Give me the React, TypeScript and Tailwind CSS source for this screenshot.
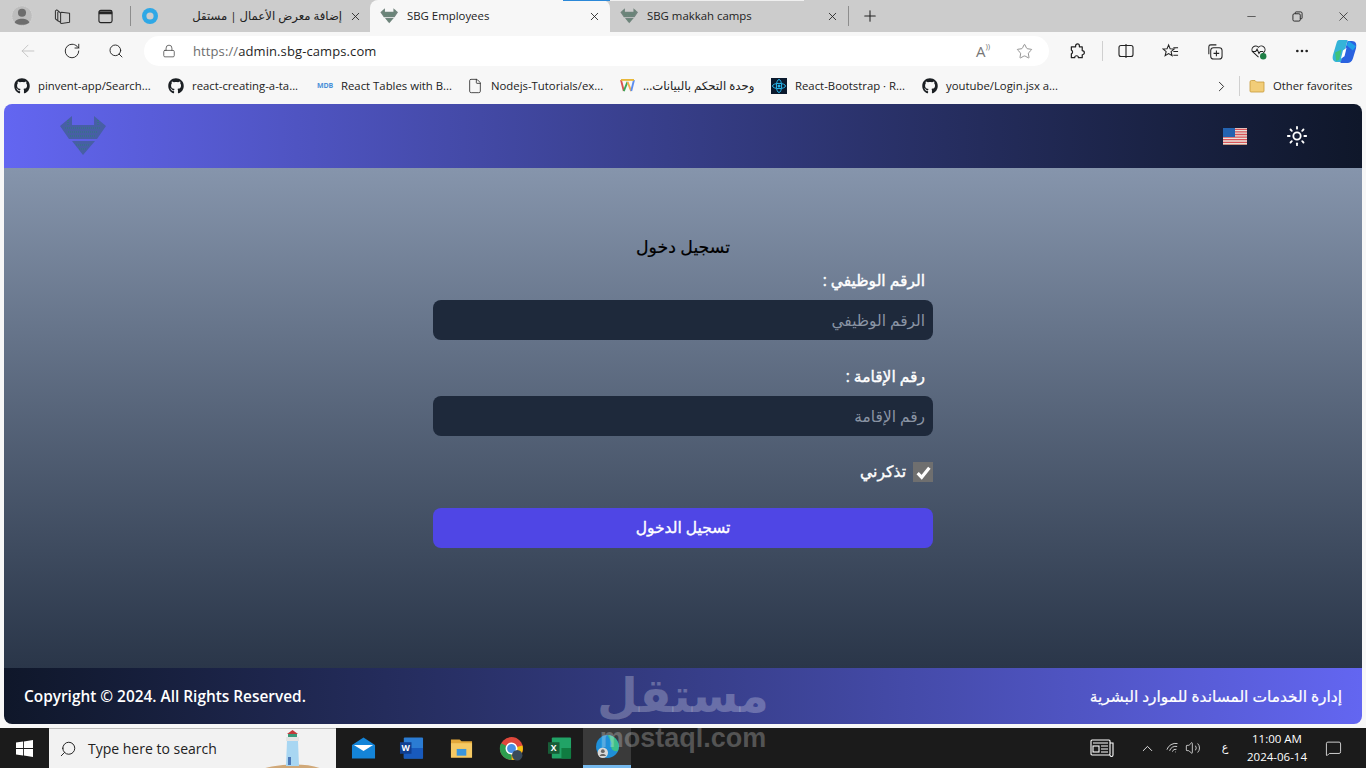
import React from "react";
import { ArrowLeft, RotateCw, Search, Lock, Star, Plus, X, Minus, Sun, ChevronRight, ChevronUp, MoreHorizontal, Volume2, Wifi, MessageSquare, File as FileIcon } from "lucide-react";
import { FaGithub } from "react-icons/fa";

const SegoeUI = "font-['Open_Sans','Noto_Sans','DejaVu_Sans',sans-serif]";

function SbgLogo({ className, color = "#475fa5", accent = "#2f7f78" }: { className?: string; color?: string; accent?: string }) {
  return (
    <svg viewBox="0 0 47 40" className={className}>
      <path d="M13 0 L1 10 L10 23 L38 23 L47 10 L35 0 L35 9 L13 9 Z" fill={color} />
      <path d="M13 25 L36 25 L24 39 Z" fill={color} />
      <path d="M6 12 H42 M9 16 H39 M11 20 H37 M17 29 H31 M20 33 H28 M9 4 V10 M39 4 V10" stroke={accent} strokeWidth="1.2" strokeDasharray="1 1" />
    </svg>
  );
}

function EdgeMini() {
  return (
    <svg viewBox="0 0 16 16" className="w-4 h-4">
      <circle cx="8" cy="8" r="8" fill="#2fa8e6" />
      <circle cx="8" cy="8" r="3.6" fill="#cccccc" />
    </svg>
  );
}

function Tab({ w, active, icon, label, rtl }: { w: string; active?: boolean; icon: React.ReactNode; label: string; rtl?: boolean }) {
  return (
    <div className={`${w} h-8 flex items-center pl-[10px] ${rtl ? "pr-[8px]" : "pr-[9px]"} shrink-0 ${active ? "bg-[#f7f7f7] rounded-t-lg" : ""}`}>
      <div className="w-[18px] flex justify-center shrink-0">{icon}</div>
      <div dir={rtl ? "rtl" : "ltr"} className={`flex-1 ${rtl ? "text-right pr-[7px] text-[11.65px]" : "pl-[9px] text-[11.4px]"} text-[#222] whitespace-nowrap overflow-hidden`}>
        {label}
      </div>
      <X size={13} strokeWidth={1.6} className="text-[#222] shrink-0" />
    </div>
  );
}

function TabStrip() {
  return (
    <div className="relative h-8 bg-[#cccccc] flex items-center shrink-0">
      <div className="w-[44px] flex justify-center">
        <svg viewBox="0 0 24 24" className="w-[22px] h-[22px]">
          <circle cx="12" cy="12" r="11" fill="#bdbdbd" stroke="#d6d6d6" strokeDasharray="1 1" />
          <circle cx="12" cy="8.5" r="4.4" fill="#6d6d6d" />
          <path d="M4 19 C5 13.5 19 13.5 20 19 C17 22.5 7 22.5 4 19 Z" fill="#6d6d6d" />
        </svg>
      </div>
      <div className="w-[36px] flex justify-center">
        <svg viewBox="0 0 18 18" className="w-[17px] h-[17px]" fill="none" stroke="#333" strokeWidth="1.1" strokeLinejoin="round">
          <path d="M8 4.5 L16.5 5.5 V15 L8 16.5 C7.3 16.5 7 16 7 15.5 V5.5 C7 5 7.4 4.5 8 4.5 Z" />
          <path d="M7 5.5 L5 3.5 L4 4.5 V13.5 L7 15" />
          <path d="M5 3.5 L3 2 L1.5 3 V11.5 L4 13.5" />
        </svg>
      </div>
      <div className="w-[50px] flex justify-center">
        <svg viewBox="0 0 16 16" className="w-[15px] h-[15px]" fill="none" stroke="#222" strokeWidth="1.2">
          <rect x="1" y="1.5" width="14" height="13" rx="2" />
          <path d="M1 5 H15" />
          <path d="M1 2.5 H15 V5 H1 Z" fill="#222" stroke="none" />
        </svg>
      </div>
      <div className="w-px h-[20px] bg-[#8d8d8d] shrink-0" />
      <Tab w="w-[239px]" icon={<EdgeMini />} label="إضافة معرض الأعمال | مستقل" rtl />
      <Tab w="w-[240px]" active icon={<SbgLogo className="w-[18px] h-[16px]" color="#74857f" accent="#3d8a5f" />} label="SBG Employees" />
      <Tab w="w-[238px]" icon={<SbgLogo className="w-[18px] h-[16px]" color="#74857f" accent="#3d8a5f" />} label="SBG makkah camps" />
      <div className="w-px h-[20px] bg-[#8d8d8d] shrink-0" />
      <div className="w-[42px] flex justify-center">
        <Plus size={18} strokeWidth={1.4} className="text-[#222]" />
      </div>
      <div className="ml-auto flex items-center text-[#222]">
        <div className="w-[46px] flex justify-center"><Minus size={13} strokeWidth={1.2} /></div>
        <div className="w-[46px] flex justify-center">
          <svg viewBox="0 0 12 12" className="w-[11px] h-[11px]" fill="none" stroke="#222" strokeWidth="1">
            <rect x="1" y="3" width="8" height="8" rx="1.5" />
            <path d="M3.5 3 V2 A1 1 0 0 1 4.5 1 H9.5 A1.5 1.5 0 0 1 11 2.5 V7.5 A1 1 0 0 1 10 8.5 H9" />
          </svg>
        </div>
        <div className="w-[46px] flex justify-center"><X size={15} strokeWidth={1.2} /></div>
      </div>
      <div className="absolute top-0 left-[563px] w-[47px] h-px bg-[#2b88d8]" />
      <div className="absolute top-0 left-[610px] w-[194px] h-px bg-[#efefef]" />
    </div>
  );
}

function Toolbar() {
  return (
    <div className="h-[38px] flex items-start pt-[4px] shrink-0">
      <div className="w-[144px] h-[30px] flex items-center shrink-0 text-[#222]">
        <div className="w-[56px] flex justify-center"><ArrowLeft size={20} strokeWidth={1} className="text-[#bdbdbd]" /></div>
        <div className="w-[32px] flex justify-center"><RotateCw size={18} strokeWidth={1.25} /></div>
        <div className="w-[56px] flex justify-center"><Search size={16} strokeWidth={1.4} /></div>
      </div>
      <div className="w-[905px] h-[30px] bg-white rounded-full flex items-center shrink-0">
        <div className="w-[49px] flex justify-center"><Lock size={14} strokeWidth={1.3} className="text-[#444]" /></div>
        <div className="text-[13px] mt-[1px] text-[#1f1f1f] whitespace-nowrap tracking-[0.1px]">
          <span className="text-[#6d6d6d]">https://</span>admin.sbg-camps.com
        </div>
        <div className="ml-auto flex items-center text-[#777]">
          <span className="text-[15px] w-[44px] text-center">A<span className="text-[8px] align-top">))</span></span>
          <div className="w-[44px] flex justify-center pr-[6px]"><Star size={17} strokeWidth={1.1} /></div>
        </div>
      </div>
      <div className="h-[30px] flex items-center text-[#222]">
        <div className="w-[53px] pl-[3px] flex justify-center">
          <svg viewBox="0 0 18 18" className="w-[17px] h-[17px]" fill="none" stroke="#222" strokeWidth="1.3" strokeLinejoin="round">
            <path d="M7 3 A2 2 0 0 1 11 3 V4 H14 V8 A2.2 2.2 0 0 1 14 12.5 V15.5 H10 A2 2 0 0 0 6 15.5 H2.5 V11.5 A2.2 2.2 0 0 0 2.5 7.5 V4 H7 Z" />
          </svg>
        </div>
        <div className="w-px h-[20px] bg-[#d0d0d0]" />
        <div className="w-[46px] flex justify-center">
          <svg viewBox="0 0 16 16" className="w-[16px] h-[16px]" fill="none" stroke="#222" strokeWidth="1.1">
            <rect x="1" y="2.5" width="14" height="11" rx="2" />
            <path d="M8 1 V15" />
          </svg>
        </div>
        <div className="w-[43px] flex justify-center">
          <svg viewBox="0 0 18 18" className="w-[17px] h-[17px]" fill="none" stroke="#222" strokeWidth="1.1">
            <path d="M7 2 L8.6 6 L13 6.3 L9.6 9.2 L10.7 13.5 L7 11.2 L3.3 13.5 L4.4 9.2 L1 6.3 L5.4 6 Z" />
            <path d="M12 5 H17 M12 9 H17 M12 13 H17" />
          </svg>
        </div>
        <div className="w-[45px] flex justify-center">
          <svg viewBox="0 0 18 18" className="w-[17px] h-[17px]" fill="none" stroke="#222" strokeWidth="1.1">
            <path d="M3 12 V4 A2 2 0 0 1 5 2 H11" />
            <rect x="5" y="5" width="12" height="12" rx="3" />
            <path d="M11 8 V14 M8 11 H14" />
          </svg>
        </div>
        <div className="w-[43px] flex justify-center relative">
          <svg viewBox="0 0 18 18" className="w-[17px] h-[17px]" fill="none" stroke="#222" strokeWidth="1.1">
            <path d="M9 15 L3 9.5 A3.7 3.7 0 0 1 9 4.5 A3.7 3.7 0 0 1 15 9.5 L12 13" />
            <path d="M2 9 H6 L7.5 6.5 L9.5 11 L11 9 H14" />
            <circle cx="14" cy="14" r="3.4" fill="#1f7f46" stroke="none" />
          </svg>
        </div>
        <div className="w-[44px] flex justify-center"><MoreHorizontal size={16} strokeWidth={2} /></div>
        <div className="w-[40px] flex justify-center">
          <svg viewBox="0 0 24 24" className="w-[25px] h-[25px]">
            <path d="M7 1 H15 L12 12 L9 22 H5 C1 22 0 19 1 15 L4 5 C4.6 2.5 5.5 1 7 1 Z" fill="#35b4d8" />
            <path d="M15 2 H19 C23 2 24 5 23 9 L20 19 C19 22 17 23 15 23 H8 L12 12 Z" fill="#2a62e0" />
            <path d="M3 13 L9 10 L7 20 L4 21 Z" fill="#3fc27a" />
            <path d="M10.5 11 L14 8.5 L12 16.5 L8.5 19 Z" fill="#ffffff" />
            <path d="M16 2 L23 7 L20 11 L14 6 Z" fill="#1f9ee8" />
          </svg>
        </div>
      </div>
    </div>
  );
}

function GH() {
  return <FaGithub size={16} className="text-[#1b1f23] shrink-0" />;
}

function Bookmark({ w, icon, label, rtl }: { w: string; icon: React.ReactNode; label: string; rtl?: boolean }) {
  return (
    <div className={`${w} flex items-center shrink-0`}>
      <div className="w-[16px] flex justify-center shrink-0">{icon}</div>
      <div dir={rtl ? "rtl" : "ltr"} className={`ml-[8px] ${rtl ? "text-[11.7px]" : "text-[11.35px]"} text-[#222] whitespace-nowrap`}>{label}</div>
    </div>
  );
}

function Bookmarks() {
  return (
    <div className="h-[34px] flex items-center pl-[14px] pb-[2px] shrink-0">
      <Bookmark w="w-[154px]" icon={<GH />} label="pinvent-app/Search..." />
      <Bookmark w="w-[149px]" icon={<GH />} label="react-creating-a-ta..." />
      <Bookmark
        w="w-[150px]"
        icon={<span className="text-[7px] font-bold text-[#4a8fd8] tracking-tight">MDB</span>}
        label="React Tables with B..."
      />
      <Bookmark w="w-[152px]" icon={<FileIcon size={16} strokeWidth={1.2} className="text-[#222]" />} label="Nodejs-Tutorials/ex..." />
      <Bookmark
        w="w-[152px]"
        icon={
          <svg viewBox="0 0 16 14" className="w-[15px] h-[13px]" fill="none" strokeWidth="2">
            <path d="M1 1 L4 13" stroke="#d9534f" />
            <path d="M4 13 L8 3" stroke="#3aa757" />
            <path d="M8 3 L12 13" stroke="#f0ad4e" />
            <path d="M12 13 L15 1" stroke="#5b8def" />
            <path d="M1 1 H15" stroke="#e8b83a" />
          </svg>
        }
        label="وحدة التحكم بالبيانات..."
        rtl
      />
      <Bookmark
        w="w-[151px]"
        icon={
          <svg viewBox="0 0 16 16" className="w-[16px] h-[16px]">
            <rect width="16" height="16" fill="#0b1a2e" />
            <ellipse cx="8" cy="8" rx="6.5" ry="2.6" fill="none" stroke="#27b5ea" />
            <ellipse cx="8" cy="8" rx="2.6" ry="6.5" fill="none" stroke="#27b5ea" />
            <circle cx="8" cy="8" r="1.5" fill="#27b5ea" />
          </svg>
        }
        label="React-Bootstrap · R..."
      />
      <Bookmark w="w-[291px]" icon={<GH />} label="youtube/Login.jsx a..." />
      <div className="w-[18px] -ml-[1px] flex justify-center shrink-0"><ChevronRight size={17} strokeWidth={1.3} className="text-[#222]" /></div>
      <div className="w-px h-[20px] bg-[#d0d0d0] ml-[9px] shrink-0" />
      <div className="w-[17px] ml-[8px] flex justify-center shrink-0">
        <svg viewBox="0 0 16 14" className="w-[16px] h-[14px]">
          <path d="M1 3 A1.5 1.5 0 0 1 2.5 1.5 H6 L7.5 3 H15 V12 A1 1 0 0 1 14 13 H2 A1 1 0 0 1 1 12 Z" fill="#f2cd78" stroke="#c79a3a" strokeWidth="0.8" />
        </svg>
      </div>
      <div className="ml-[8px] text-[11.3px] text-[#222] whitespace-nowrap">Other favorites</div>
    </div>
  );
}

function Field({ label, placeholder }: { label: string; placeholder: string }) {
  return (
    <div className="mb-[24px] w-full">
      <label className="block h-6 leading-6 pr-2 mb-[8px] text-[15.5px] text-white [-webkit-text-stroke:0.4px_#ffffff]">{label}</label>
      <input
        readOnly
        placeholder={placeholder}
        className="block w-full h-10 rounded-lg bg-[#1e293b] px-2 text-[15.4px] text-white placeholder:text-[#8a94a4] outline-none"
      />
    </div>
  );
}

function Page() {
  return (
    <div className={`mx-1 w-[1358px] h-[620px] rounded-t-lg rounded-b-lg overflow-hidden flex flex-col shrink-0 ${SegoeUI}`}>
      <header className="h-16 shrink-0 flex items-center bg-linear-to-r from-[#6366f1] to-[#0f172a]">
        <div className="ml-[55px]">
          <SbgLogo className="w-[47px] h-[40px]" />
        </div>
        <div className="ml-auto flex items-center">
          <svg viewBox="0 0 24 17" className="w-6 h-[17px]">
            <rect width="24" height="17" fill="#e9e3da" />
            <path d="M0 1.3 H24 M0 3.9 H24 M0 6.5 H24 M0 9.1 H24 M0 11.7 H24 M0 14.3 H24" stroke="#d9545a" strokeWidth="1.3" />
            <path d="M0 16.5 H24" stroke="#c88f7f" strokeWidth="1" />
            <rect width="12" height="9" fill="#2463b0" />
          </svg>
          <Sun size={22} strokeWidth={2} className="text-white ml-[39px] mr-[54px]" />
        </div>
      </header>
      <main dir="rtl" className="h-[500px] shrink-0 flex flex-col items-center pt-[64px] bg-linear-to-b from-[#8695ac] to-[#2a3649]">
        <div className="w-[500px]">
          <h1 className="h-7 leading-[30px] mb-[8px] text-center text-[17.3px] font-normal text-black [-webkit-text-stroke:0.2px_#000000]">تسجيل دخول</h1>
          <Field label="الرقم الوظيفي :" placeholder="الرقم الوظيفي" />
          <Field label="رقم الإقامة :" placeholder="رقم الإقامة" />
          <div className="flex items-center h-5 mt-[26px] mb-[26px]">
            <div className="w-5 h-5 bg-[#6f6f6f] flex items-center justify-center">
              <svg viewBox="0 0 16 16" className="w-[17px] h-[17px]" fill="none" stroke="#fff" strokeWidth="3">
                <path d="M2.5 8.5 L6.3 12.5 L13.5 3.5" />
              </svg>
            </div>
            <span className="mr-[7px] text-[15.6px] text-white [-webkit-text-stroke:0.4px_#ffffff]">تذكرني</span>
          </div>
          <button className="block w-full h-10 rounded-lg bg-[#4f46e5] text-[15.5px] text-white [-webkit-text-stroke:0.35px_#ffffff]">تسجيل الدخول</button>
        </div>
      </main>
      <footer className="h-14 shrink-0 flex items-center justify-between px-5 pt-[1px] bg-linear-to-r from-[#0f172a] to-[#6366f1]">
        <div className="text-[15.4px] font-semibold text-white">Copyright © 2024. All Rights Reserved.</div>
        <div dir="rtl" className="text-[15.45px] text-white [-webkit-text-stroke:0.2px_#ffffff]">إدارة الخدمات المساندة للموارد البشرية</div>
      </footer>
    </div>
  );
}

function TaskIcon({ children, active }: { children: React.ReactNode; active?: boolean }) {
  return (
    <div className={`w-[48px] h-10 flex items-center justify-center shrink-0 ${active ? "bg-[#3a3a3a] border-b-[3px] border-[#76b9ed]" : ""}`}>
      {children}
    </div>
  );
}

function Taskbar() {
  return (
    <div className="h-10 bg-[#1b1b1b] flex items-center mt-1 shrink-0 font-['Open_Sans',sans-serif]">
      <div className="w-[49px] flex justify-center shrink-0">
        <svg viewBox="0 0 16 16" className="w-[17px] h-[17px]" fill="#fff">
          <path d="M0 2.3 L6.6 1.4 V7.6 H0 Z M7.4 1.3 L16 0 V7.6 H7.4 Z M0 8.4 H6.6 V14.6 L0 13.7 Z M7.4 8.4 H16 V16 L7.4 14.7 Z" />
        </svg>
      </div>
      <div className="relative w-[287px] h-10 bg-[#f2f2f2] border-t border-[#bbb] flex items-center shrink-0 overflow-hidden">
        <Search size={18} strokeWidth={1.3} className="ml-[10px] text-[#222] -scale-x-100" />
        <span className="ml-[11px] text-[14px] text-[#222]">Type here to search</span>
        <svg viewBox="0 0 60 40" className="absolute right-[14px] top-0 w-[60px] h-10">
          <path d="M0 40 C15 35 45 33 60 40 Z" fill="#d0a878" />
          <path d="M25 12 H36 L37 37 H24 Z" fill="#a8d6f2" />
          <rect x="24" y="8" width="13" height="4" fill="#e4e4e4" />
          <rect x="26" y="5" width="9" height="3" fill="#3a9a7a" />
          <path d="M25 5 L30.5 1 L36 5 Z" fill="#c23a3a" />
          <rect x="26" y="28" width="3" height="8" fill="#4a78b8" />
        </svg>
      </div>
      <div className="flex items-center ml-[3px] -mr-[1px]">
        <TaskIcon>
          <svg viewBox="0 0 26 24" className="w-[25px] h-[24px]">
            <path d="M1 9 L13 1 L25 9 V23 H1 Z" fill="#1484d8" />
            <path d="M3 9 H23 L13 15 Z" fill="#ffffff" />
          </svg>
        </TaskIcon>
        <TaskIcon>
          <svg viewBox="0 0 26 24" className="w-[25px] h-[24px]">
            <rect x="5" y="1" width="20" height="22" rx="1" fill="#2b7cd3" />
            <rect x="5" y="12" width="20" height="11" fill="#185abd" />
            <rect x="1" y="6" width="12" height="12" fill="#103f91" />
            <text x="7" y="15.5" fontSize="9" fontWeight="700" fill="#fff" textAnchor="middle">W</text>
          </svg>
        </TaskIcon>
        <div className="w-[2px] shrink-0" />
        <TaskIcon>
          <svg viewBox="0 0 24 24" className="w-[23px] h-[24px]">
            <path d="M1 3 H10 L12 5 H23 V22 H1 Z" fill="#e3a83a" />
            <rect x="1" y="7" width="22" height="15" fill="#f5c964" />
            <rect x="7" y="13" width="10" height="7" fill="#3a96dd" />
          </svg>
        </TaskIcon>
        <div className="w-[2px] shrink-0" />
        <TaskIcon>
          <svg viewBox="0 0 24 24" className="w-[25px] h-[25px]">
            <circle cx="12" cy="12" r="11" fill="#e0483c" />
            <path d="M12 12 L22.5 9 A11 11 0 0 1 12 23 Z" fill="#f4c20d" />
            <path d="M12 12 L12 23 A11 11 0 0 1 2 7 Z" fill="#2e9e4f" />
            <circle cx="12" cy="12" r="5" fill="#4a90e2" stroke="#fff" strokeWidth="1.5" />
            <circle cx="17.5" cy="18.5" r="5" fill="#3a4a5a" />
          </svg>
        </TaskIcon>
        <TaskIcon>
          <svg viewBox="0 0 26 24" className="w-[25px] h-[24px]">
            <rect x="5" y="1" width="20" height="22" rx="1" fill="#21a366" />
            <rect x="15" y="12" width="10" height="11" fill="#107c41" />
            <rect x="1" y="6" width="12" height="12" fill="#185c37" />
            <text x="7" y="15.5" fontSize="9" fontWeight="700" fill="#fff" textAnchor="middle">X</text>
          </svg>
        </TaskIcon>
        <TaskIcon active>
          <svg viewBox="0 0 24 24" className="w-[25px] h-[25px]">
            <circle cx="12" cy="12" r="11" fill="#1f8fd8" />
            <path d="M12 1 A11 11 0 0 1 22 16 C18 18 14 14 16 9 C15 6 13 3 12 1 Z" fill="#3cc08a" />
            <circle cx="7.5" cy="18" r="5" fill="#d8d8d8" />
            <circle cx="7.5" cy="16.5" r="1.8" fill="#666" />
            <path d="M4.5 21 C5 18.5 10 18.5 10.5 21 Z" fill="#666" />
          </svg>
        </TaskIcon>
      </div>
      <div className="ml-auto flex items-center text-white shrink-0">
        <svg viewBox="0 0 24 20" className="w-[24px] h-[20px]" fill="none" stroke="#fff" strokeWidth="1.1">
          <rect x="1" y="2" width="19" height="15" rx="1" />
          <path d="M20 5 H23 V17 A1.5 1.5 0 0 1 20 17 M3 5 H18" />
          <rect x="3" y="8" width="6" height="6" />
          <path d="M11 8 H18 M11 11 H18 M11 14 H18" />
        </svg>
        <div className="w-[22px] ml-[22px] flex justify-center"><ChevronUp size={17} strokeWidth={1.2} /></div>
        <div className="w-[20px] ml-[5px] flex justify-center"><Wifi size={14} strokeWidth={1.2} className="-rotate-[30deg]" /></div>
        <div className="w-[20px] ml-[0px] flex justify-center"><Volume2 size={16} strokeWidth={1.1} /></div>
        <div className="w-[20px] ml-[12px] text-center text-[11px] font-['DejaVu_Sans',sans-serif]">ع</div>
        <div className="w-[72px] ml-[6px] flex flex-col items-center text-[11.5px] leading-[18px] text-white">
          <div>11:00 AM</div>
          <div>2024-06-14</div>
        </div>
        <div className="w-[20px] ml-[10px] mr-[23px] flex justify-center">
          <MessageSquare size={17} strokeWidth={1.1} />
        </div>
      </div>
    </div>
  );
}

export default function App() {
  return (
    <div className={`relative w-[1366px] h-[768px] overflow-hidden bg-[#f7f7f7] flex flex-col ${SegoeUI}`}>
      <TabStrip />
      <Toolbar />
      <Bookmarks />
      <Page />
      <Taskbar />
      <div className="absolute left-[583px] top-[668px] w-[200px] flex flex-col items-center pointer-events-none">
        <div dir="rtl" className="h-[56px] text-[47px] leading-[56px] font-bold text-white/25 font-['DejaVu_Sans',sans-serif]">مستقل</div>
        <div className="h-[30px] text-[27px] leading-[30px] font-bold font-['Liberation_Sans',sans-serif] mt-[-1px] text-white/25">mostaql.com</div>
      </div>
    </div>
  );
}
